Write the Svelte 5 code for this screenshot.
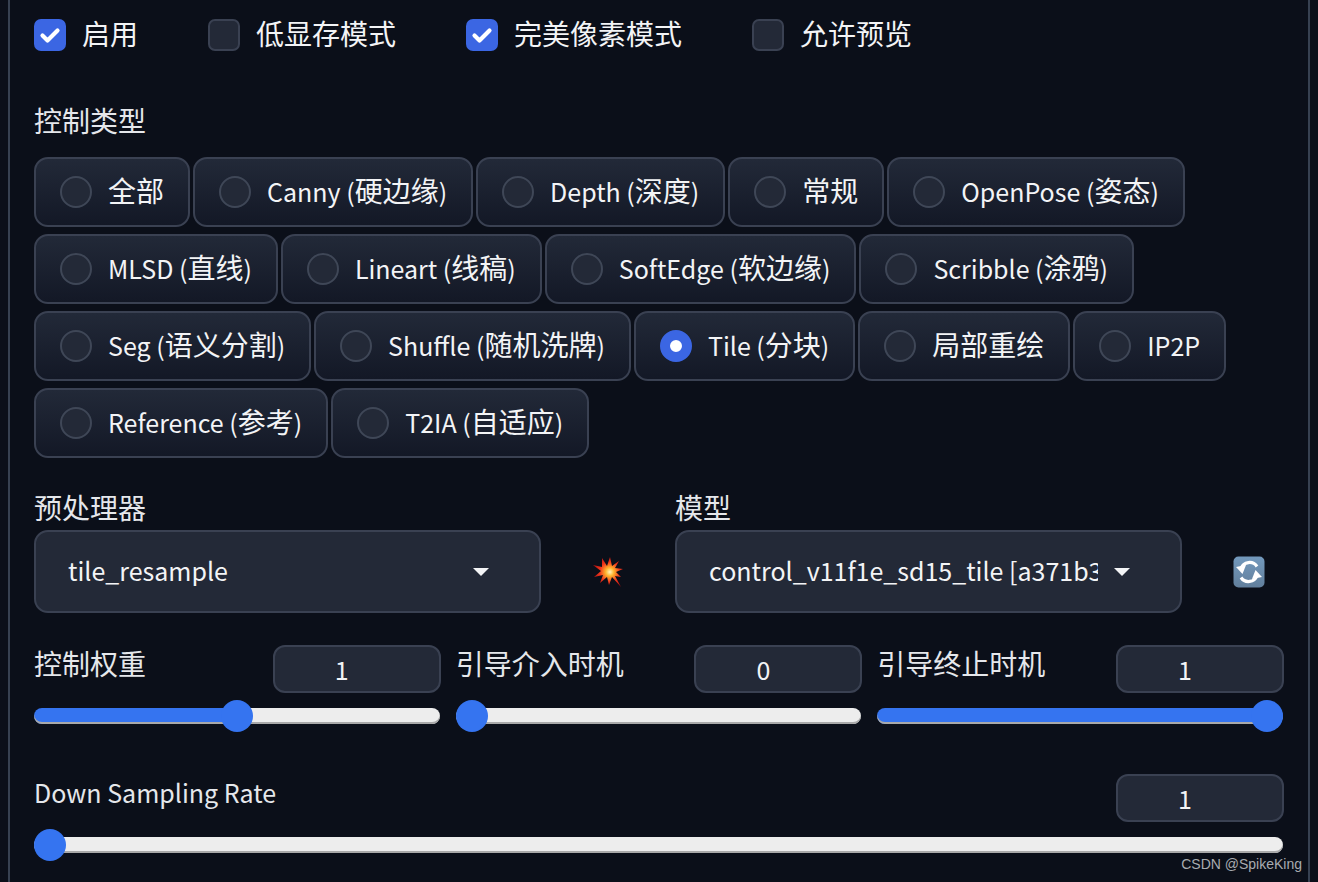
<script>
  const toggles = [
    { label: '启用', checked: true },
    { label: '低显存模式', checked: false },
    { label: '完美像素模式', checked: true },
    { label: '允许预览', checked: false }
  ];

  const rows = [
    ['全部', 'Canny (硬边缘)', 'Depth (深度)', '常规', 'OpenPose (姿态)'],
    ['MLSD (直线)', 'Lineart (线稿)', 'SoftEdge (软边缘)', 'Scribble (涂鸦)'],
    ['Seg (语义分割)', 'Shuffle (随机洗牌)', 'Tile (分块)', '局部重绘', 'IP2P'],
    ['Reference (参考)', 'T2IA (自适应)']
  ];
  const selected = 'Tile (分块)';

  const sliders = [
    { label: '控制权重', value: 1, max: 2 },
    { label: '引导介入时机', value: 0, max: 1 },
    { label: '引导终止时机', value: 1, max: 1 }
  ];

  // latin runs are set smaller, the CJK font's latin is wider than the original's
  function runs(text) {
    return text.match(/[\u4e00-\u9fff]+|[^\u4e00-\u9fff]+/g).map((t) => ({
      text: t,
      latin: !/[\u4e00-\u9fff]/.test(t)
    }));
  }
</script>

<div class="panel">
  <div class="toggles">
    {#each toggles as t}
      <label class="toggle">
        <span class="box" class:on={t.checked}>
          {#if t.checked}
            <svg viewBox="0 0 32 32" width="32" height="32">
              <path d="M8.5 16.5l5 5 10-10" fill="none" stroke="#fff" stroke-width="4.2" stroke-linecap="round" stroke-linejoin="round" />
            </svg>
          {/if}
        </span>
        <span class="raised">{t.label}</span>
      </label>
    {/each}
  </div>

  <div class="heading">控制类型</div>
  <div class="chips">
    {#each rows as row}
      <div class="chip-row">
        {#each row as name}
          <div class="chip">
            <span class="radio" class:on={name === selected}></span>
            <span class="raised">{#each runs(name) as r}<span class:latin={r.latin}>{r.text}</span>{/each}</span>
          </div>
        {/each}
      </div>
    {/each}
  </div>

  <div class="selects">
    <div class="field">
      <div class="heading small">预处理器</div>
      <div class="select">
        <span class="value latin raised">tile_resample</span>
        <span class="caret"></span>
      </div>
    </div>
    <div class="tool">
      <svg viewBox="0 0 32 32" width="32" height="32">
        <defs>
          <radialGradient id="burst" cx="0.56" cy="0.5" r="0.55">
            <stop offset="0" stop-color="#fff6c0" />
            <stop offset="0.25" stop-color="#ffb52e" />
            <stop offset="0.6" stop-color="#f0381c" />
            <stop offset="1" stop-color="#b81010" />
          </radialGradient>
        </defs>
        <polygon fill="url(#burst)" points="10,2 15,10 18,1 20,10 27,5 23,12 31,13 24,16 29,21 23,20 29,31 20,21 17,29 15,21 8,27 11,19 2,21 9,15 1,9 10,11" />
      </svg>
    </div>
    <div class="field">
      <div class="heading small">模型</div>
      <div class="select">
        <span class="value latin raised">control_v11f1e_sd15_tile [a371b31b]</span>
        <span class="caret"></span>
      </div>
    </div>
    <div class="tool">
      <svg viewBox="0 0 32 32" width="32" height="32">
        <defs>
          <linearGradient id="tile" x1="0" y1="0" x2="0" y2="1">
            <stop offset="0" stop-color="#7399bd" />
            <stop offset="1" stop-color="#627f9c" />
          </linearGradient>
        </defs>
        <rect x="0.5" y="0.5" width="31" height="31" rx="5" fill="url(#tile)" />
        <path d="M8 12.5a9 9 0 0 1 16-2" fill="none" stroke="#fff" stroke-width="3.2" />
        <path d="M24 19.5a9 9 0 0 1-16 2" fill="none" stroke="#fff" stroke-width="3.2" />
        <polygon fill="#fff" points="3,11 13,9 9.5,18" />
        <polygon fill="#fff" points="29,21 19,23 22.5,14" />
      </svg>
    </div>
  </div>

  <div class="sliders">
    {#each sliders as s}
      <div class="slider">
        <div class="slider-top">
          <span class="slider-label">{s.label}</span>
          <span class="number">{s.value}</span>
        </div>
        <input type="range" min="0" max={s.max} step="0.01" value={s.value} style="--pct: {(s.value / s.max) * 100}%" />
      </div>
    {/each}
  </div>

  <div class="slider wide">
    <div class="slider-top">
      <span class="slider-label latin">Down Sampling Rate</span>
      <span class="number">1</span>
    </div>
    <input type="range" min="1" max="8" step="0.01" value="1" style="--pct: 0%" />
  </div>

  <div class="mark">CSDN @SpikeKing</div>
</div>

<style>
  :global(body) {
    background: #0b0f19;
  }
  .panel {
    position: relative;
    box-sizing: border-box;
    height: 882px;
    margin: 0 8px 0 8px;
    padding: 19px 25px 0 24px;
    border-left: 2px solid #374151;
    border-right: 2px solid #374151;
    background: #0b0f19;
    color: #f3f4f6;
    font-family: "Noto Sans CJK SC", "Noto Sans", sans-serif;
    font-size: 28px;
    line-height: 32px;
    overflow: hidden;
  }
  .latin {
    font-size: 25px;
  }
  .raised {
    margin-bottom: 4px;
  }
  .toggles {
    display: flex;
    gap: 70px;
  }
  .toggle {
    display: flex;
    align-items: center;
    gap: 16px;
    height: 32px;
  }
  .box {
    box-sizing: border-box;
    width: 32px;
    height: 32px;
    border: 2px solid #3a4152;
    border-radius: 7px;
    background: #232937;
  }
  .box.on {
    border: 0;
    background: #3b66e3;
  }
  .box svg {
    display: block;
  }
  .heading {
    margin-top: 52px;
    color: #e5e7eb;
    height: 34px;
    line-height: 34px;
  }
  .heading.small {
    margin-top: 0;
    height: 46px;
    line-height: 46px;
  }
  .chips {
    display: flex;
    flex-direction: column;
    gap: 7px;
    margin-top: 20px;
  }
  .chip-row {
    display: flex;
    gap: 3px;
  }
  .chip {
    box-sizing: border-box;
    display: flex;
    align-items: center;
    gap: 16px;
    height: 70px;
    padding: 0 24px;
    border: 2px solid #3a4152;
    border-radius: 14px;
    background: linear-gradient(to bottom, #222938, #131826);
    white-space: nowrap;
  }
  .radio {
    box-sizing: border-box;
    flex: none;
    width: 32px;
    height: 32px;
    border: 2px solid #3f4757;
    border-radius: 50%;
    background: #232937;
  }
  .radio.on {
    border: 10px solid #3b66e3;
    background: #fff;
  }
  .selects {
    display: grid;
    grid-template-columns: 507px 134px 507px 102px;
    margin-top: 26px;
  }
  .field {
    min-width: 0;
  }
  .select {
    box-sizing: border-box;
    display: flex;
    align-items: center;
    gap: 16px;
    height: 83px;
    padding: 0 50px 0 32px;
    border: 2px solid #3a4152;
    border-radius: 14px;
    background: #232937;
  }
  .value {
    flex: 1;
    overflow: hidden;
    white-space: nowrap;
  }
  .caret {
    flex: none;
    width: 0;
    height: 0;
    border-left: 8px solid transparent;
    border-right: 8px solid transparent;
    border-top: 8px solid #f3f4f6;
  }
  .tool {
    display: flex;
    align-items: center;
    justify-content: center;
    height: 83px;
    margin-top: 46px;
  }
  .selects .tool:last-child {
    justify-content: flex-start;
    padding-left: 51px;
  }
  .sliders {
    display: grid;
    grid-template-columns: repeat(3, 1fr);
    gap: 16px;
    margin-top: 32px;
  }
  .slider-top {
    display: flex;
    justify-content: space-between;
    align-items: flex-start;
  }
  .slider-label {
    margin-top: 2px;
    color: #e5e7eb;
  }
  .number {
    box-sizing: border-box;
    flex: none;
    width: 168px;
    height: 48px;
    margin-right: -1px;
    padding-right: 30px;
    border: 2px solid #3a4152;
    border-radius: 12px;
    background: #232937;
    text-align: center;
    line-height: 44px;
    font-size: 25px;
  }
  .wide {
    margin-top: 42px;
  }
  input[type="range"] {
    display: block;
    width: 100%;
    height: 32px;
    margin: 7px 0 0;
    background: transparent;
    appearance: none;
    -webkit-appearance: none;
  }
  input[type="range"]::-webkit-slider-runnable-track {
    height: 16px;
    border-radius: 8px;
    box-shadow: inset 0 -2px 0 #a9a9a9;
    background: linear-gradient(to right, #3574f0 var(--pct), #ededed var(--pct));
  }
  input[type="range"]::-webkit-slider-thumb {
    -webkit-appearance: none;
    width: 32px;
    height: 32px;
    margin-top: -8px;
    border-radius: 50%;
    background: #3574f0;
  }
  .mark {
    position: absolute;
    right: 6px;
    bottom: 9px;
    color: #a8abb0;
    font-family: "Liberation Sans", sans-serif;
    font-size: 14px;
    line-height: 18px;
  }
</style>
